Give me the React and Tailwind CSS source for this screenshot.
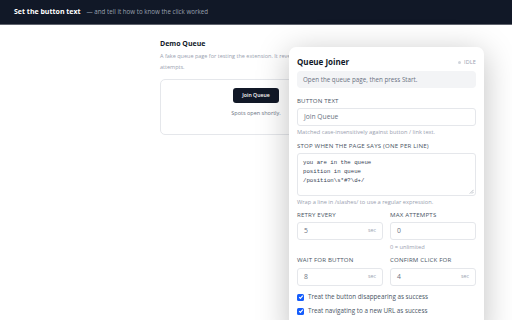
import React from 'react';

const Label = ({ children }) => (
  <div className="text-[6.1px] leading-[8px] font-medium tracking-[0.03em] text-gray-600 uppercase">
    {children}
  </div>
);

const Hint = ({ children, className = 'mt-[2px]' }) => (
  <div className={`text-[5.7px] leading-[8px] text-gray-400 ${className}`}>{children}</div>
);

const NumberField = ({ value, suffix }) => (
  <div className="h-[18px] border border-gray-200 rounded-[3px] flex items-center justify-between px-[6px]">
    <span className="text-[6.8px] text-gray-500">{value}</span>
    {suffix && <span className="text-[5.3px] text-gray-400">{suffix}</span>}
  </div>
);

const Check = ({ children }) => (
  <label className="flex items-center gap-[4px] h-[10px] text-[6.3px] text-gray-600">
    <span className="w-[7px] h-[7px] rounded-[1.5px] bg-blue-600 flex items-center justify-center">
      <svg viewBox="0 0 10 10" className="w-[6px] h-[6px]" fill="none" stroke="white" strokeWidth="2">
        <path d="M2 5.2l2 2 4-4.4" />
      </svg>
    </span>
    {children}
  </label>
);

export default function App() {
  return (
    <div className="relative w-[512px] h-[320px] overflow-hidden bg-white font-['Open_Sans',sans-serif]">
      {/* header */}
      <div className="h-[25px] bg-[#111827] border-b border-[#5f636d] flex items-center px-[14px] gap-[6px]">
        <span className="text-[7px] font-bold text-white">Set the button text</span>
        <span className="text-[6.2px] text-gray-400">— and tell it how to know the click worked</span>
      </div>

      {/* demo page */}
      <div className="w-[192px] mx-auto pt-[14px]">
        <h1 className="text-[7px] font-bold text-gray-900 leading-[10px]">Demo Queue</h1>
        <p className="mt-[2px] text-[5.5px] leading-[11px] text-gray-400">
          <span className="whitespace-nowrap">A fake queue page for testing the extension. It reveals the button after a few</span>
          <br />
          attempts.
        </p>
        <div className="mt-[6px] h-[56px] border border-gray-200 rounded-[5px] flex flex-col items-center pt-[8px]">
          <button className="bg-[#111827] text-white text-[5.2px] font-semibold px-[9px] h-[15px] rounded-[3px]">
            Join Queue
          </button>
          <div className="mt-[6px] text-[5.5px] text-gray-500">Spots open shortly.</div>
        </div>
      </div>

      {/* extension panel */}
      <div className="absolute left-[289px] top-[47px] w-[195px] h-[290px] bg-white rounded-[7px] shadow-[0_6px_32px_rgba(0,0,0,0.25)] px-[8px] pt-[10px]">
        <div className="flex items-center justify-between h-[10px]">
          <span className="text-[8px] leading-[10px] font-bold text-gray-900">Queue Joiner</span>
          <span className="flex items-center gap-[3px] text-[5.5px] leading-[8px] text-gray-400 tracking-wide">
            <span className="w-[3px] h-[3px] rounded-full bg-gray-300" />
            IDLE
          </span>
        </div>
        <div className="mt-[4px] h-[17px] bg-gray-100 rounded-[4px] flex items-center px-[6px] text-[6.25px] text-gray-500">
          Open the queue page, then press Start.
        </div>

        <div className="mt-[9px]">
          <Label>Button text</Label>
          <div className="mt-[3px] h-[18px] border border-gray-200 rounded-[3px] flex items-center px-[6px] text-[6.7px] text-gray-500">
            Join Queue
          </div>
          <Hint>Matched case-insensitively against button / link text.</Hint>
        </div>

        <div className="mt-[6px]">
          <Label>Stop when the page says (one per line)</Label>
          <div className="relative mt-[3px] h-[43px] border border-gray-200 rounded-[3px] px-[5px] pt-[4px] font-['Liberation_Mono',monospace] text-[5.7px] leading-[9px] text-gray-700">
            <div>you are in the queue</div>
            <div>position in queue</div>
            <div>/position\s*#?\d+/</div>
            <svg viewBox="0 0 6 6" className="absolute right-[1px] bottom-[1px] w-[5px] h-[5px]" stroke="#9ca3af" strokeWidth="0.8">
              <path d="M1 5.5L5.5 1M3.5 5.5L5.5 3.5" />
            </svg>
          </div>
          <Hint>Wrap a line in /slashes/ to use a regular expression.</Hint>
        </div>

        <div className="mt-[5px] grid grid-cols-2 gap-x-[7px]">
          <div>
            <Label>Retry every</Label>
            <div className="mt-[3px]">
              <NumberField value="5" suffix="sec" />
            </div>
          </div>
          <div>
            <Label>Max attempts</Label>
            <div className="mt-[3px]">
              <NumberField value="0" />
            </div>
            <Hint className="mt-[3px]">0 = unlimited</Hint>
          </div>
        </div>

        <div className="mt-[5px] grid grid-cols-2 gap-x-[7px]">
          <div>
            <Label>Wait for button</Label>
            <div className="mt-[4px]">
              <NumberField value="8" suffix="sec" />
            </div>
          </div>
          <div>
            <Label>Confirm click for</Label>
            <div className="mt-[4px]">
              <NumberField value="4" suffix="sec" />
            </div>
          </div>
        </div>

        <div className="mt-[6px] flex flex-col gap-[4px]">
          <Check>Treat the button disappearing as success</Check>
          <Check>Treat navigating to a new URL as success</Check>
        </div>
      </div>
    </div>
  );
}
